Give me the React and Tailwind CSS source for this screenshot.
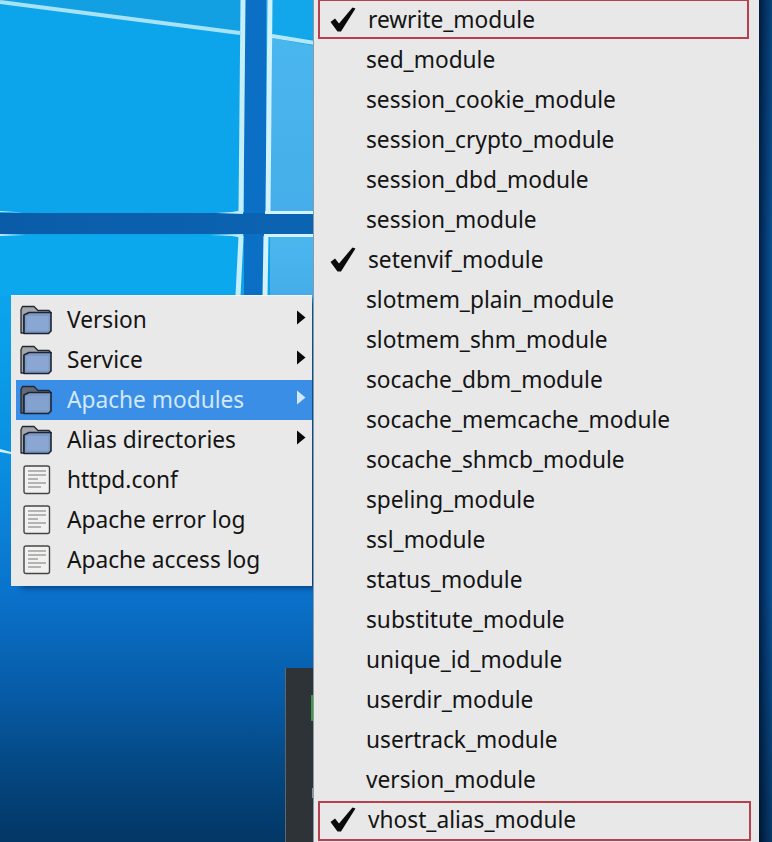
import React from "react";

function Folder({ dim }) {
  return (
    <svg width="34" height="30" viewBox="0 0 34 30" className="shrink-0">
      <path d="M2 4.5 L3.5 1.5 L15 1.5 L19 5.5 L30 5.5 L32 8 L11 8 L5 11 L5 28 L2 28 Z" fill={dim ? "#5f6a78" : "#a2a5aa"} stroke="#23272e" strokeWidth="1.3" strokeLinejoin="round" />
      <path d="M5 28.5 L5 10 L10 7.5 L32 7.5 L32 26 L29.5 28.5 Z" fill={dim ? "#7d9bc6" : "#7d99c4"} stroke="#1d2330" strokeWidth="1.6" strokeLinejoin="round" />
      <rect x="7.5" y="11" width="22" height="14.5" fill={dim ? "#83a2cf" : "#8aa6d2"} />
    </svg>
  );
}

function Doc() {
  return (
    <svg width="28" height="30" viewBox="0 0 28 30" className="shrink-0">
      <rect x="1" y="1" width="25.5" height="27.5" rx="2" fill="#f1f1f0" stroke="#45454a" strokeWidth="1.4" />
      <g stroke="#8b8b8e" strokeWidth="1.2">
        <line x1="5" y1="6" x2="23" y2="6" />
        <line x1="5" y1="10" x2="23" y2="10" />
        <line x1="5" y1="14" x2="15" y2="14" />
        <line x1="5" y1="18" x2="23" y2="18" />
        <line x1="5" y1="22" x2="18" y2="22" />
      </g>
    </svg>
  );
}

function Check() {
  return (
    <svg width="26" height="25" viewBox="0 0 26 25" className="shrink-0">
      <path d="M0.5 15 L5 11.5 L9 16.5 L22.5 0.5 L25.5 1.5 L11 24.5 L7.5 24.5 Z" fill="#0a0a0a" />
    </svg>
  );
}

function Arrow({ light }) {
  return (
    <svg width="10" height="15" viewBox="0 0 10 15" className="absolute left-[280px] top-[10px]">
      <path d="M1 0.5 L9.5 7.5 L1 14.5 Z" fill={light ? "#d4e8fb" : "#0a0a0a"} />
    </svg>
  );
}

function Wallpaper() {
  return (
    <svg width="772" height="842" viewBox="0 0 772 842" className="absolute inset-0">
      <defs>
        <linearGradient id="sky" x1="0" y1="0" x2="0" y2="1">
          <stop offset="0" stopColor="#0fa2e8" />
          <stop offset="0.36" stopColor="#0ba4ec" />
          <stop offset="0.55" stopColor="#0a8fe0" />
          <stop offset="0.7" stopColor="#0a73cc" />
          <stop offset="0.82" stopColor="#075ca8" />
          <stop offset="0.92" stopColor="#04467f" />
          <stop offset="1" stopColor="#033766" />
        </linearGradient>
        <linearGradient id="bar" x1="0" y1="0" x2="1" y2="0">
          <stop offset="0" stopColor="#0a5ca8" />
          <stop offset="1" stopColor="#0b64b2" />
        </linearGradient>
        <linearGradient id="edge" x1="0" y1="0" x2="1" y2="0">
          <stop offset="0" stopColor="#011f48" />
          <stop offset="0.5" stopColor="#053a72" />
          <stop offset="1" stopColor="#0a5190" />
        </linearGradient>
        <linearGradient id="edgeV" x1="0" y1="0" x2="0" y2="1">
          <stop offset="0" stopColor="#000" stopOpacity="0.15" />
          <stop offset="0.3" stopColor="#000" stopOpacity="0" />
          <stop offset="0.7" stopColor="#000" stopOpacity="0" />
          <stop offset="1" stopColor="#000" stopOpacity="0.3" />
        </linearGradient>
        <linearGradient id="pane" x1="0" y1="0" x2="0" y2="1">
          <stop offset="0" stopColor="#4ab6ee" />
          <stop offset="1" stopColor="#45aeea" />
        </linearGradient>
      </defs>
      <rect width="772" height="842" fill="url(#sky)" />
      <rect x="0" y="0" width="240" height="212" fill="#0ca4ea" />
      <polygon points="0,2 240,33 240,0 0,0" fill="#13a0e2" />
      <rect x="244" y="0" width="22" height="296" fill="#0b6fc6" />
      <rect x="0" y="213" width="316" height="21" fill="url(#bar)" />
      <rect x="271" y="0" width="44" height="38" fill="#12a6ea" />
      <polygon points="272,38 315,46 315,212 270,212" fill="url(#pane)" />
      <rect x="270" y="237" width="45" height="60" fill="url(#pane)" />
      <rect x="0" y="236" width="240" height="60" fill="#0ba8ee" />
      <line x1="0" y1="2" x2="240" y2="33" stroke="#a6e3f6" strokeWidth="4" />
      <line x1="272" y1="36" x2="315" y2="43" stroke="#b4e8f8" strokeWidth="4" />
      <line x1="243" y1="0" x2="241" y2="212" stroke="#c4eefa" strokeWidth="5" />
      <line x1="270" y1="0" x2="268" y2="212" stroke="#d2f2fb" strokeWidth="5" />
      <path d="M0 212 L24 212.5 L0 211 Z M216 213 L243 214 L243 210 L232 212 Z" fill="#bfeaf8" />
      <rect x="265" y="211" width="50" height="3" fill="#d2f2fb" />
      <path d="M0 236 L26 235 L0 234 Z M210 235 L243 234 L243 238 L232 236 Z" fill="#bfeaf8" />
      <rect x="264" y="234" width="51" height="3" fill="#d2f2fb" />
      <line x1="241" y1="236" x2="238" y2="296" stroke="#c4eefa" strokeWidth="5" />
      <line x1="266" y1="236" x2="265" y2="296" stroke="#d2f2fb" strokeWidth="5" />
      <path d="M0 449 L11 452 L11 454 L0 452 Z" fill="#cdeefa" />
      <rect x="759" y="0" width="13" height="842" fill="url(#edge)" />
      <rect x="759" y="0" width="13" height="842" fill="url(#edgeV)" />
    </svg>
  );
}

const left = [
  ["Version", "f"],
  ["Service", "f"],
  ["Apache modules", "f", true],
  ["Alias directories", "f"],
  ["httpd.conf", "d"],
  ["Apache error log", "d"],
  ["Apache access log", "d"],
];

const right = [
  ["rewrite_module", true, true],
  ["sed_module"],
  ["session_cookie_module"],
  ["session_crypto_module"],
  ["session_dbd_module"],
  ["session_module"],
  ["setenvif_module", true],
  ["slotmem_plain_module"],
  ["slotmem_shm_module"],
  ["socache_dbm_module"],
  ["socache_memcache_module"],
  ["socache_shmcb_module"],
  ["speling_module"],
  ["ssl_module"],
  ["status_module"],
  ["substitute_module"],
  ["unique_id_module"],
  ["userdir_module"],
  ["usertrack_module"],
  ["version_module"],
  ["vhost_alias_module", true, true],
];

export default function App() {
  return (
    <div className="relative w-[772px] h-[842px] overflow-hidden font-['Noto_Sans',sans-serif] text-[22.7px] text-[#141414]">
      <Wallpaper />

      {/* dark window behind the menus */}
      <div className="absolute left-[285px] top-[668px] w-[30px] h-[174px] bg-[#2e3338] border-l border-[#5c6670]">
        <div className="absolute left-[25px] top-[27px] w-[3px] h-[26px] bg-[#3f9a45]" />
        <div className="absolute left-[26px] top-[120px] w-[2px] h-[10px] bg-[#8f9499]" />
      </div>

      {/* left popup menu */}
      <div className="absolute left-[11px] top-[295px] w-[301px] h-[291px] pt-[4px] pl-[5px] bg-[#e9e9e9] border-t border-[#f5f5f5] shadow-[8px_4px_6px_-2px_rgba(0,20,60,0.55)] flex flex-col">
        {left.map(([label, kind, active]) => (
          <div
            key={label}
            className={
              active
                ? "relative h-10 flex items-center bg-[#3a8ee6] text-[#d2e8fb]"
                : "relative h-10 flex items-center"
            }
          >
            <div className="w-[51px] pl-[3px] flex items-center">
              {kind === "f" ? <Folder dim={active} /> : <span className="pl-[4px] flex"><Doc /></span>}
            </div>
            <span className="leading-none">{label}</span>
            {kind === "f" && <Arrow light={active} />}
          </div>
        ))}
      </div>

      {/* right popup menu */}
      <div className="absolute left-[313px] top-0 w-[446px] h-[842px] bg-[#e8e8e8] border-l border-[#8e98a4] flex flex-col">
        {right.map(([label, checked, boxed]) => (
          <div key={label} className="relative h-10 shrink-0 flex items-center">
            {boxed && (
              <div
                className={
                  label === "rewrite_module"
                    ? "absolute left-[4px] top-[-1px] w-[431px] h-10 border-2 border-[#b8404e]"
                    : "absolute left-[4px] top-[1px] w-[433px] h-10 border-2 border-[#b8404e]"
                }
              />
            )}
            {checked && (
              <span className="absolute left-[16px] top-[7px] flex"><Check /></span>
            )}
            <span className={checked ? "pl-[54px] leading-none" : "pl-[52px] leading-none"}>{label}</span>
          </div>
        ))}
      </div>
    </div>
  );
}
